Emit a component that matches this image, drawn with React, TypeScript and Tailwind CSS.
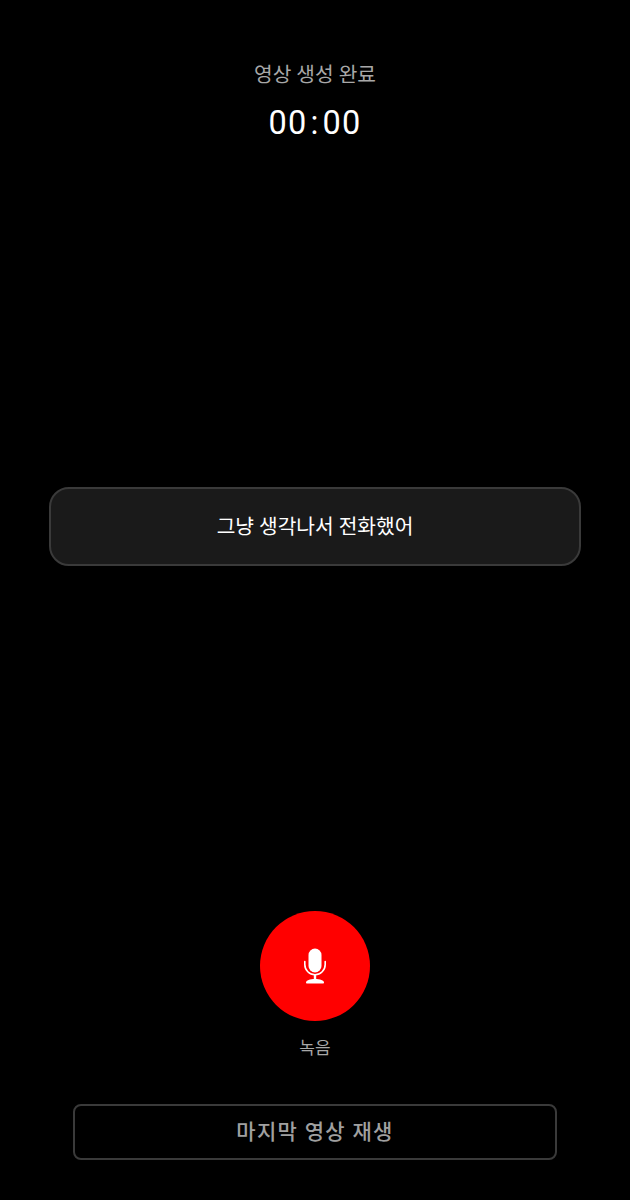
export default function App() {
  return (
    <div className="flex h-[1200px] w-full flex-col items-center bg-black font-['Roboto','Noto_Sans_CJK_KR',sans-serif]">
      <div className="mt-[62px] text-[20.3px] leading-[26px] text-[#a8a8a8]">영상 생성 완료</div>
      <div className="mt-[14px] flex text-[32.5px] font-normal leading-[42px] tracking-[1.2px] text-white">
        <span>00</span>
        <span className="mx-[3px]">:</span>
        <span>00</span>
      </div>

      <div className="mt-[343px] flex h-[79px] w-[532px] items-center justify-center rounded-[20px] border-2 border-[#3a3a3a] bg-[#1a1a1a] pt-[2px] text-[20.3px] text-white">
        그냥 생각나서 전화했어
      </div>

      <div className="mt-[345px] flex h-[110px] w-[110px] items-center justify-center rounded-full bg-[#ff0000]">
        <svg width="24" height="36" viewBox="0 0 24 36" fill="none">
          <rect x="5.500" y="0.500" width="13" height="24" rx="6.500" fill="#fff" />
          <path d="M1.800 13.500v3a10.200 10.200 0 0 0 20.400 0v-3" stroke="#fff" strokeWidth="1.600" strokeLinecap="round" />
          <rect x="10.800" y="26" width="2.400" height="6" fill="#fff" />
          <path d="M3 34.500c0-2 4-3.500 9-3.500s9 1.500 9 3.500c0 .6-.5 1-1 1H4c-.5 0-1-.4-1-1z" fill="#fff" />
        </svg>
      </div>
      <div className="mt-[15px] text-[17px] leading-[24px] text-[#a8a8a8]">녹음</div>

      <div className="mt-[44px] flex h-[56px] w-[484px] items-center justify-center rounded-[8px] border-2 border-[#3a3a3a] pt-[2px] text-[21px] font-medium tracking-[1.3px] text-[#a0a0a0]">
        마지막 영상 재생
      </div>
    </div>
  );
}
